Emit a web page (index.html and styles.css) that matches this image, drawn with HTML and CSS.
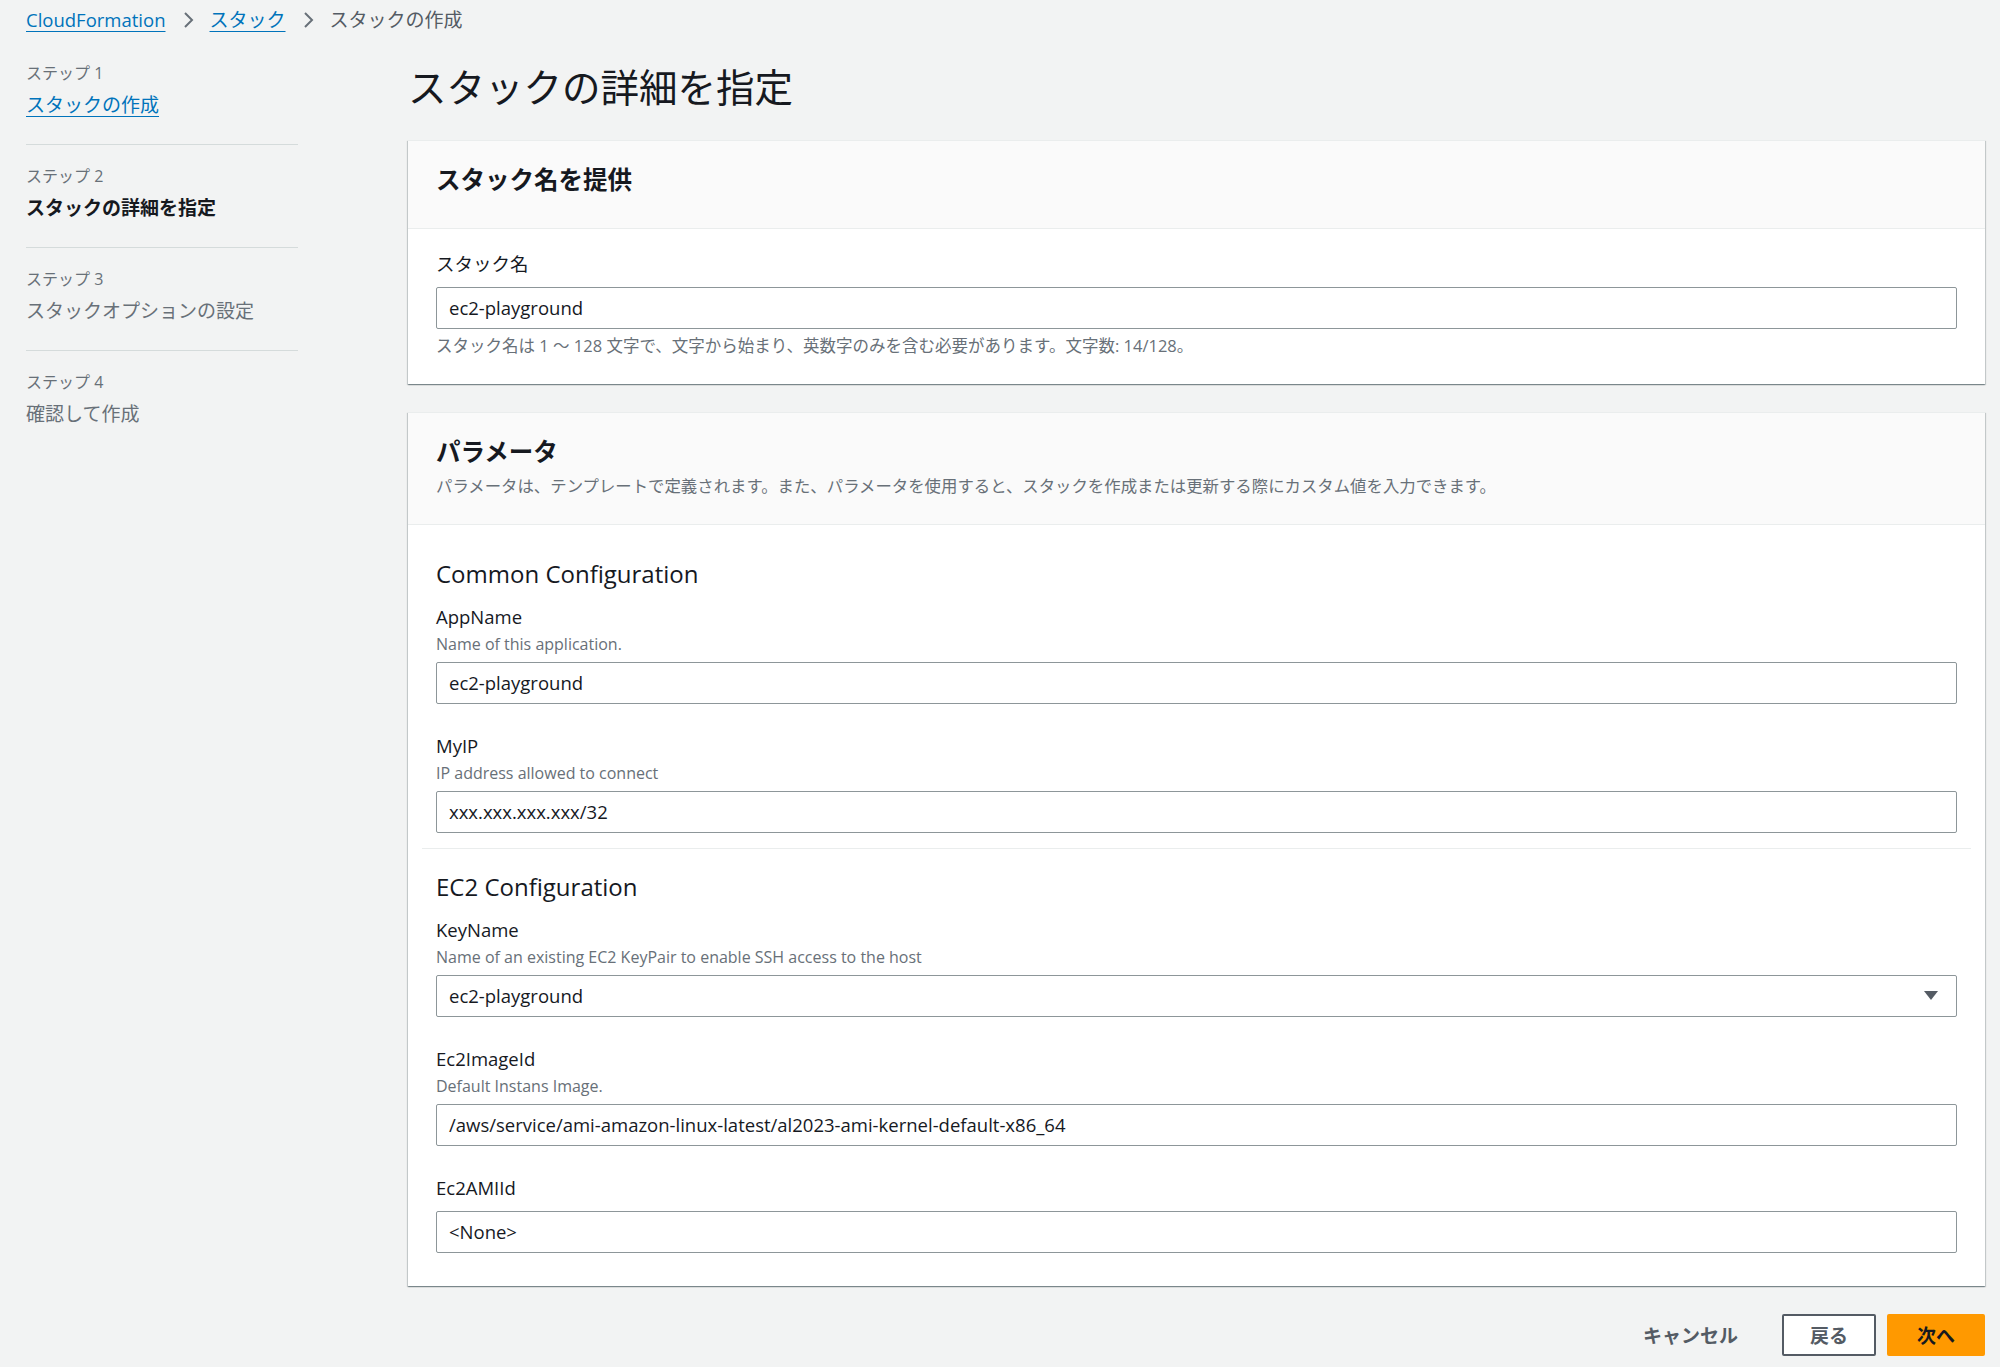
FILE: index.html
```html
<!DOCTYPE html>
<html lang="ja">
<head>
<meta charset="utf-8">
<title>スタックの詳細を指定</title>
<link rel="stylesheet" href="styles.css">
</head>
<body>
<nav class="breadcrumb">
  <a class="crumb-link" href="#">CloudFormation</a>
  <svg class="chev" viewBox="0 0 12 16"><polyline points="2,1 9,8 2,15"/></svg>
  <a class="crumb-link ja" href="#">スタック</a>
  <svg class="chev" viewBox="0 0 12 16"><polyline points="2,1 9,8 2,15"/></svg>
  <span class="crumb-current ja">スタックの作成</span>
</nav>
<div class="layout">
  <aside class="steps">
    <div class="step">
      <div class="step-label">ステップ 1</div>
      <div class="step-title"><a href="#">スタックの作成</a></div>
    </div>
    <div class="step">
      <div class="step-label">ステップ 2</div>
      <div class="step-title step-current">スタックの詳細を指定</div>
    </div>
    <div class="step">
      <div class="step-label">ステップ 3</div>
      <div class="step-title">スタックオプションの設定</div>
    </div>
    <div class="step">
      <div class="step-label">ステップ 4</div>
      <div class="step-title">確認して作成</div>
    </div>
  </aside>
  <main class="main">
    <h1 class="page-title">スタックの詳細を指定</h1>

    <section class="card">
      <div class="card-header">
        <h2 class="card-title">スタック名を提供</h2>
      </div>
      <div class="card-body">
        <div class="field">
          <div class="field-label ja">スタック名</div>
          <div class="input">ec2-playground</div>
          <div class="field-hint">スタック名は 1 ～ 128 文字で、文字から始まり、英数字のみを含む必要があります。文字数: 14/128。</div>
        </div>
      </div>
    </section>

    <section class="card">
      <div class="card-header with-desc">
        <h2 class="card-title">パラメータ</h2>
        <div class="card-desc">パラメータは、テンプレートで定義されます。また、パラメータを使用すると、スタックを作成または更新する際にカスタム値を入力できます。</div>
      </div>
      <div class="card-body params">
        <div class="param-group">
          <h3 class="group-title">Common Configuration</h3>
          <div class="field">
            <div class="field-label">AppName</div>
            <div class="field-desc">Name of this application.</div>
            <div class="input">ec2-playground</div>
          </div>
          <div class="field">
            <div class="field-label">MyIP</div>
            <div class="field-desc">IP address allowed to connect</div>
            <div class="input">xxx.xxx.xxx.xxx/32</div>
          </div>
        </div>
        <div class="param-group">
          <h3 class="group-title">EC2 Configuration</h3>
          <div class="field">
            <div class="field-label">KeyName</div>
            <div class="field-desc">Name of an existing EC2 KeyPair to enable SSH access to the host</div>
            <div class="input select">
              <span>ec2-playground</span>
              <svg class="caret" viewBox="0 0 14 10"><polygon points="0,0 14,0 7,9"/></svg>
            </div>
          </div>
          <div class="field">
            <div class="field-label">Ec2ImageId</div>
            <div class="field-desc">Default Instans Image.</div>
            <div class="input">/aws/service/ami-amazon-linux-latest/al2023-ami-kernel-default-x86_64</div>
          </div>
          <div class="field">
            <div class="field-label">Ec2AMIId</div>
            <div class="input">&lt;None&gt;</div>
          </div>
        </div>
      </div>
    </section>

    <div class="footer">
      <button class="btn btn-link">キャンセル</button>
      <button class="btn btn-normal">戻る</button>
      <button class="btn btn-primary">次へ</button>
    </div>
  </main>
</div>
</body>
</html>
```

FILE: styles.css
```css
* { box-sizing: border-box; }

html, body {
  margin: 0;
  padding: 0;
}

body {
  width: 2000px;
  height: 1367px;
  overflow: hidden;
  background: #f2f3f3;
  color: #16191f;
  font-family: "Open Sans", "Noto Sans CJK JP", sans-serif;
  font-size: 18.5px;
  line-height: 24px;
}

a {
  color: #0073bb;
  text-decoration: underline;
  text-decoration-thickness: 1px;
  text-underline-offset: 4px;
}

/* Japanese-only runs are set a touch larger, as in the reference */
.ja {
  font-size: 19px;
}

/* Breadcrumb */
.breadcrumb {
  display: flex;
  align-items: center;
  height: 24px;
  margin-top: 8px;
  padding-left: 26px;
}

.chev {
  width: 12px;
  height: 16px;
  margin: 0 15px 0 17px;
  fill: none;
  stroke: #687078;
  stroke-width: 2;
}

.crumb-current {
  color: #545b64;
}

/* Layout */
.layout {
  display: grid;
  grid-template-columns: 272px 1fr;
  column-gap: 110px;
  padding: 0 15px 0 26px;
}

/* Steps */
.steps {
  padding-top: 10px;
}

.step {
  padding: 19px 0 25px;
  border-bottom: 1px solid #d5dbdb;
}

.step:last-child {
  border-bottom: none;
}

.step-label {
  font-size: 16px;
  line-height: 24px;
  color: #687078;
}

.step-title {
  margin-top: 6px;
  font-size: 19px;
  line-height: 28px;
  color: #687078;
}

.step-current {
  color: #16191f;
  font-weight: 700;
}

/* Main */
.page-title {
  margin: 32px 0 30px;
  font-size: 38.5px;
  line-height: 46px;
  font-weight: 400;
  color: #16191f;
}

.card {
  background: #fff;
  border-top: 1px solid #eaeded;
  box-shadow: 0 1px 1px 0 rgba(0, 28, 36, 0.3),
              1px 1px 1px 0 rgba(0, 28, 36, 0.15),
              -1px 1px 1px 0 rgba(0, 28, 36, 0.15);
  margin-bottom: 28px;
}

.card-header {
  background: #fafafa;
  border-bottom: 1px solid #eaeded;
  padding: 23px 28px 32px;
}

.card-header.with-desc {
  padding-bottom: 27px;
}

.card-title {
  margin: 0;
  font-size: 24.5px;
  line-height: 32px;
  font-weight: 700;
}

.card-desc {
  margin-top: 7px;
  font-size: 16.4px;
  line-height: 22px;
  color: #687078;
}

.card-body {
  padding: 23px 28px 27px;
}

.card-body.params {
  padding: 0 14px;
}

.param-group {
  padding: 33px 14px 15px;
}

.param-group + .param-group {
  border-top: 1px solid #eaeded;
  padding-top: 22px;
}

.param-group:last-child {
  padding-bottom: 33px;
}

.group-title {
  margin: 0;
  font-size: 24px;
  line-height: 32px;
  font-weight: 400;
}

/* Fields */
.group-title + .field {
  margin-top: 15px;
}

.field + .field {
  margin-top: 30px;
}

.field-label {
  font-size: 18.5px;
  line-height: 24px;
}

.field-desc {
  margin-top: 4px;
  font-size: 16px;
  line-height: 22px;
  color: #687078;
}

.field-hint {
  margin-top: 6px;
  font-size: 16.5px;
  line-height: 22px;
  color: #687078;
}

.input {
  display: flex;
  align-items: center;
  height: 42px;
  margin-top: 7px;
  padding: 0 12px;
  background: #fff;
  border: 1px solid #8d9699;
  border-radius: 2px;
  font-size: 18.5px;
  color: #16191f;
}

.field-label + .input {
  margin-top: 11px;
}

.select {
  justify-content: space-between;
  padding-right: 18px;
}

.caret {
  width: 14px;
  height: 10px;
  fill: #545b64;
}

/* Footer */
.footer {
  display: flex;
  justify-content: flex-end;
  align-items: center;
  margin-top: 28px;
}

.btn {
  display: flex;
  align-items: center;
  justify-content: center;
  height: 42px;
  padding: 0;
  border-radius: 2px;
  font-family: inherit;
  font-size: 19px;
  font-weight: 700;
  cursor: pointer;
}

.btn-link {
  padding: 0 22px;
  margin-right: 22px;
  background: transparent;
  border: none;
  color: #545b64;
}

.btn-normal {
  width: 94px;
  margin-right: 11px;
  background: #fff;
  border: 2px solid #545b64;
  color: #545b64;
}

.btn-primary {
  width: 98px;
  background: #ff9900;
  border: 2px solid #ff9900;
  color: #16191f;
}
```
